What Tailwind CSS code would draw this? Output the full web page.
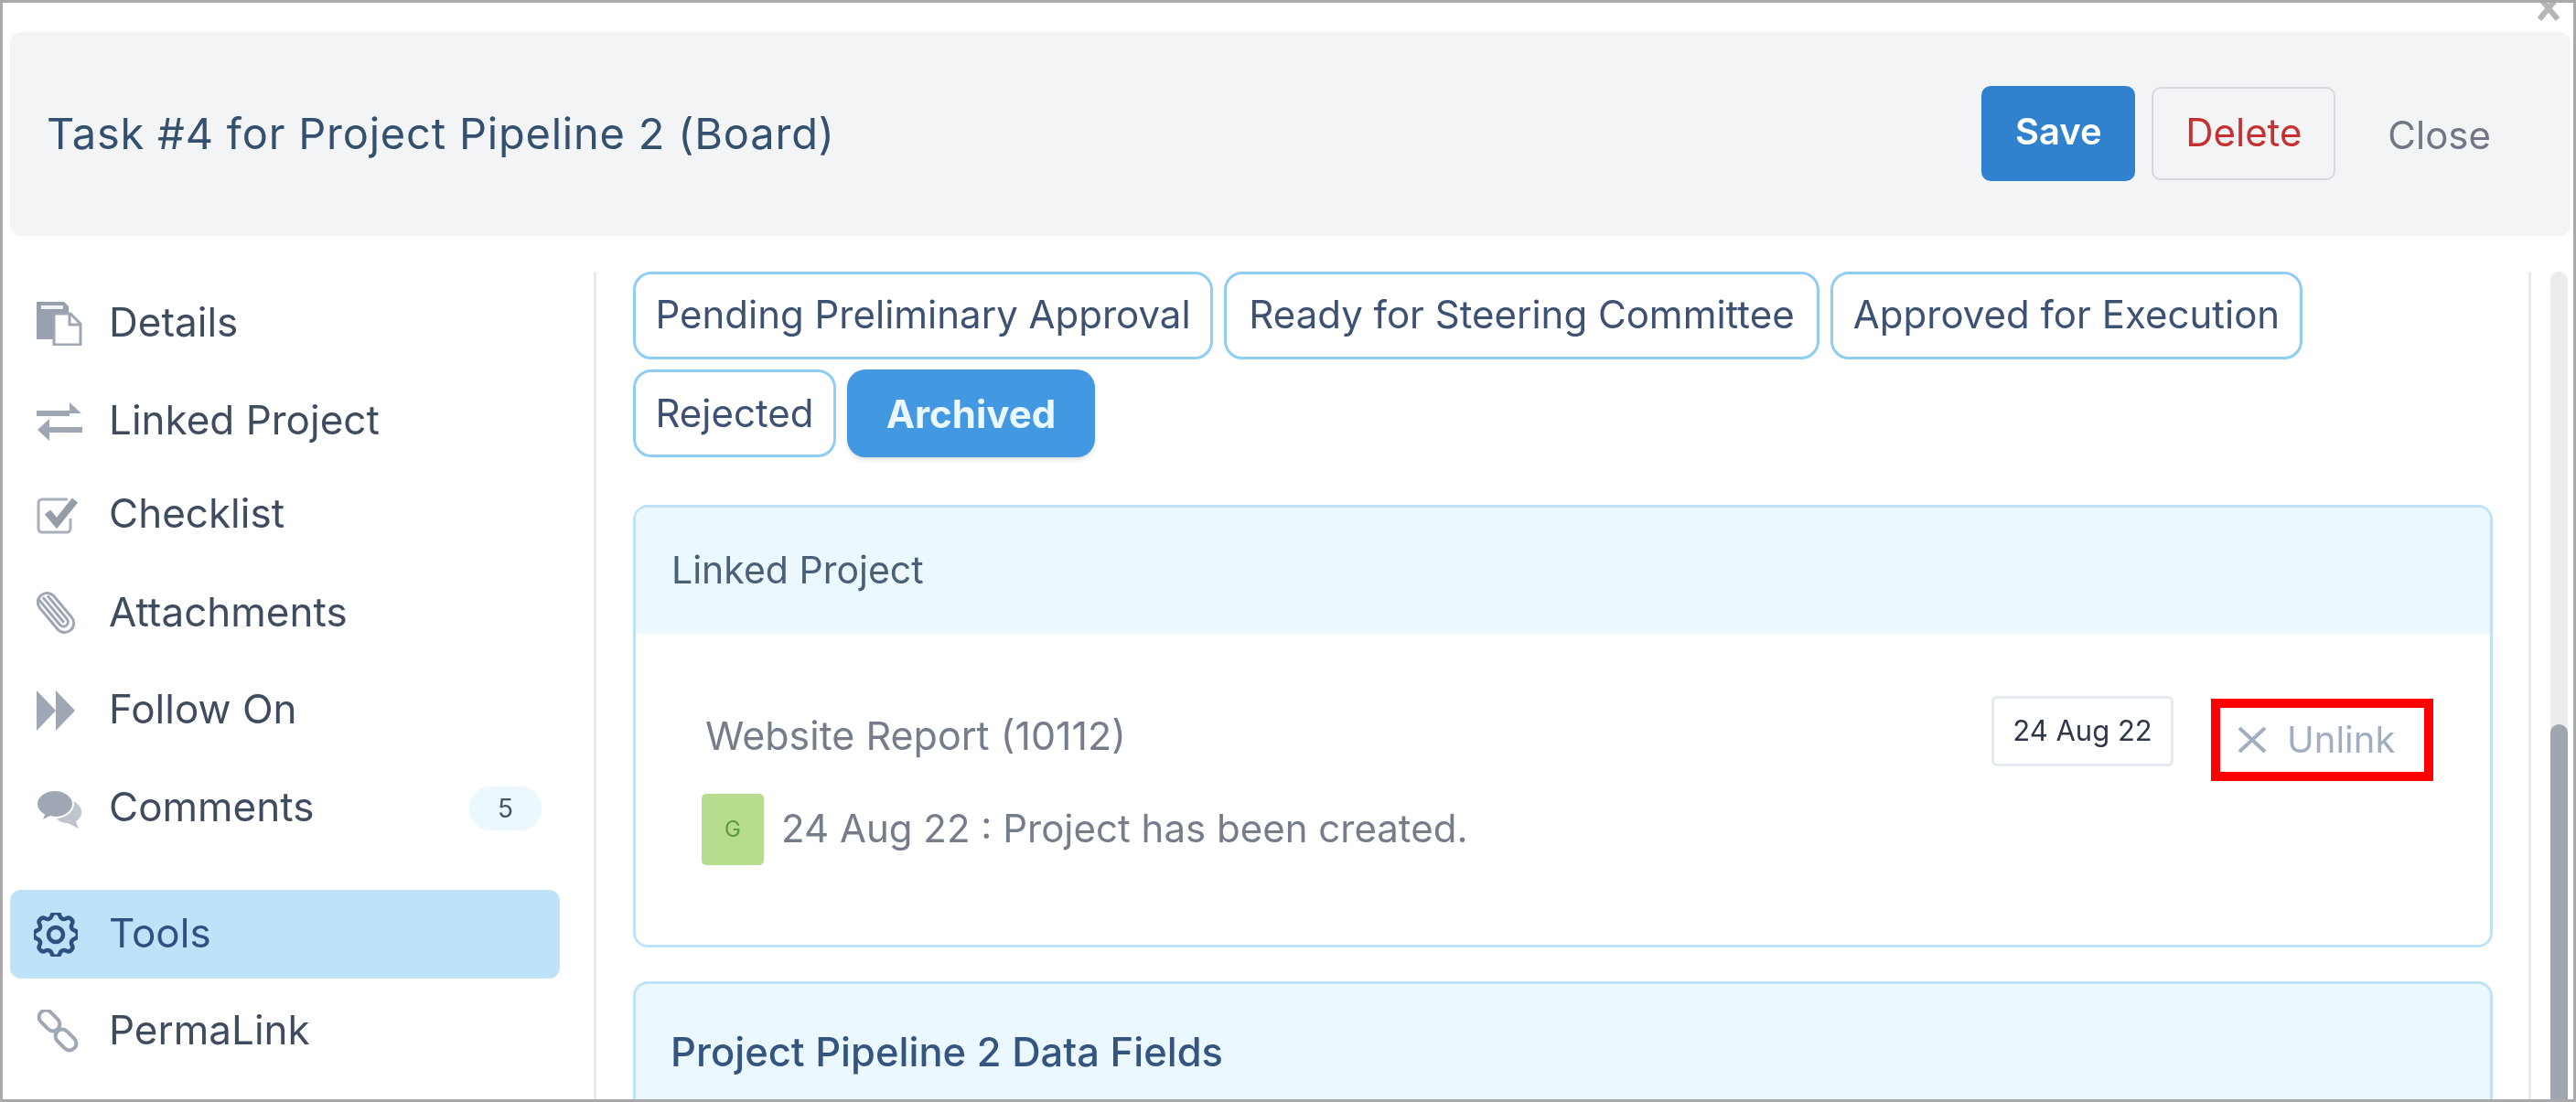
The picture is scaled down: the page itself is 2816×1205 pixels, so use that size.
<!DOCTYPE html>
<html lang="en">
<head>
    <meta charset="UTF-8">
    <title>Task #4</title>
    <script src="https://cdn.jsdelivr.net/npm/@tailwindcss/browser@4"></script>
</head>
<body class="bg-white">
<div class="relative w-[2816px] h-[1205px] overflow-hidden border-[3px] border-[#a9a9a9] bg-white blur-[0.6px] font-['Inter',sans-serif]">

    <!-- modal close -->
    <svg class="absolute left-[2770px] top-[-9px] w-[26px] h-[30px] text-[#b5b5b5]" viewBox="0 0 26 30" fill="none" stroke="currentColor" stroke-width="6"><path d="M3 3l20 24M23 3L3 27"/></svg>

    <!-- header -->
    <div class="mt-[32px] ml-[8px] w-[2799px] h-[223px] rounded-[12px] bg-[#f3f4f6] flex items-center pl-[40px] pr-[87px]">
        <h1 class="text-[47px] tracking-[0.8px] leading-none text-[#34506f] mt-[-2px]">Task #4 for Project Pipeline 2 (Board)</h1>
        <div class="ml-auto flex items-center">
            <button class="w-[168px] h-[104px] pb-[3px] rounded-[10px] bg-[#3182ce] text-white text-[40px] font-semibold mt-[-2px]">Save</button>
            <button class="ml-[18px] w-[201px] h-[102px] pb-[3px] rounded-[10px] border-[2px] border-[#d5d8de] text-[#c53030] text-[42px] mt-[-2px]">Delete</button>
            <span class="ml-[57px] text-[42px] text-[#6f7785] mt-[2px]">Close</span>
        </div>
    </div>

    <div class="flex h-[950px] mt-[39px]">
        <!-- sidebar -->
        <aside class="w-[649px] shrink-0 border-r-[3px] border-[#e8eaee] pl-[8px] text-[44px] text-[#3f4c5f]">
            <div class="w-[601px]">
                <div class="h-[97px] mt-[8px] flex items-center pl-[29px]">
                    <svg class="w-[50px] h-[48px] shrink-0" viewBox="0 0 50 48"><path d="M0 0h30l5 5v36H0z" fill="#98a0ae"/><rect x="5" y="4" width="24" height="4" fill="#f3f4f6"/><path d="M19 13h18l11 11v23H19z" fill="#fff" stroke="#a0a7b4" stroke-width="3"/><path d="M36 14v11h11" fill="none" stroke="#a0a7b4" stroke-width="3"/></svg>
                    <span class="ml-[29px] mt-[-3px]">Details</span>
                </div>
                <div class="h-[97px] mt-[10px] flex items-center pl-[29px]">
                    <svg class="w-[50px] h-[48px] shrink-0" viewBox="0 0 50 48" fill="#a0a7b4"><path d="M0 12h36V3l13 12-13 0v3H0zM50 30H14v-9L1 33l13 12v-9h36z"/></svg>
                    <span class="ml-[29px] mt-[-3px]">Linked Project</span>
                </div>
                <div class="h-[97px] mt-[5px] flex items-center pl-[29px]">
                    <svg class="w-[50px] h-[48px] shrink-0" viewBox="0 0 50 48" fill="none"><path d="M34 7H6a4 4 0 0 0-4 4v28a4 4 0 0 0 4 4h27a4 4 0 0 0 4-4V28" stroke="#a9b0bc" stroke-width="3"/><path d="M12 21l10 12L42 8" stroke="#959dab" stroke-width="8"/></svg>
                    <span class="ml-[29px] mt-[-3px]">Checklist</span>
                </div>
                <div class="h-[97px] mt-[11px] flex items-center pl-[29px]">
                    <svg class="w-[50px] h-[48px] shrink-0" viewBox="0 0 50 48" fill="none" stroke="#a0a7b4" stroke-width="3"><g transform="translate(21 23) rotate(-40)"><rect x="-10" y="-25" width="20" height="50" rx="10"/><path d="M-5 -25V13a5 5 0 0 0 10 0V-20M0 -22V14"/></g></svg>
                    <span class="ml-[29px] mt-[-3px]">Attachments</span>
                </div>
                <div class="h-[97px] mt-[9px] flex items-center pl-[29px]">
                    <svg class="w-[50px] h-[48px] shrink-0" viewBox="0 0 50 48" fill="#a0a7b4"><path d="M0 2l21 22L0 46zM21 2l21 22-21 22z"/></svg>
                    <span class="ml-[29px] mt-[-3px]">Follow On</span>
                </div>
                <div class="h-[97px] mt-[10px] flex items-center pl-[29px]">
                    <svg class="w-[50px] h-[48px] shrink-0" viewBox="0 0 50 48"><path d="M40 16c6 3 10 8 9 14-1 4-3 6-6 8l3 8-12-6c-5 0-10-2-12-5z" fill="#c0c5cd"/><path d="M20 4C9 4 0 11 0 19c0 5 3 9 8 12l-3 7 10-5c2 0 3 1 5 1 11 0 20-7 20-15S31 4 20 4z" fill="#a0a7b4" stroke="#fff" stroke-width="2"/></svg>
                    <span class="ml-[29px] mt-[-3px]">Comments</span>
                    <span class="ml-auto mr-[20px] w-[79px] h-[48px] rounded-full bg-[#ebf8ff] text-[28px] text-[#4a5568] flex items-center justify-center">5</span>
                </div>
                <div class="h-[97px] mt-[41px] rounded-[12px] bg-[#bee3f8] flex items-center pl-[26px] text-[#2c5282]">
                    <svg class="w-[48px] h-[48px] shrink-0" viewBox="3 3 18 18" fill="none" stroke="#2c5282" stroke-width="1.7"><path d="M10.325 4.317c.426-1.756 2.924-1.756 3.35 0a1.724 1.724 0 002.573 1.066c1.543-.94 3.31.826 2.37 2.37a1.724 1.724 0 001.065 2.572c1.756.426 1.756 2.924 0 3.35a1.724 1.724 0 00-1.066 2.573c.94 1.543-.826 3.31-2.37 2.37a1.724 1.724 0 00-2.572 1.065c-.426 1.756-2.924 1.756-3.35 0a1.724 1.724 0 00-2.573-1.066c-1.543.94-3.31-.826-2.37-2.37a1.724 1.724 0 00-1.065-2.572c-1.756-.426-1.756-2.924 0-3.35a1.724 1.724 0 001.066-2.573c-.94-1.543.826-3.31 2.37-2.37.996.608 2.296.07 2.572-1.065z"/><circle cx="12" cy="12" r="3"/></svg>
                    <span class="ml-[34px] mt-[-3px]">Tools</span>
                </div>
                <div class="h-[97px] mt-[9px] flex items-center pl-[29px]">
                    <svg class="w-[50px] h-[48px] shrink-0" viewBox="0 0 50 48" fill="none" stroke="#a0a7b4" stroke-width="4"><rect x="-13" y="-7.5" width="26" height="15" rx="7.5" transform="translate(14 12) rotate(45)"/><rect x="-13" y="-7.5" width="26" height="15" rx="7.5" transform="translate(32 33) rotate(45)"/></svg>
                    <span class="ml-[29px] mt-[-3px]">PermaLink</span>
                </div>
            </div>
        </aside>

        <!-- main column -->
        <main class="w-[2115px] shrink-0 border-r-[3px] border-[#e8eaee] pl-[40px]">
            <div class="flex flex-wrap gap-x-[12px] gap-y-[11px] w-[2040px] text-[42px] text-[#3d5272]">
                <span class="w-[634px] h-[96px] pb-[3px] rounded-[20px] border-[3px] border-[#90cdf4] flex items-center justify-center">Pending Preliminary Approval</span>
                <span class="w-[651px] h-[96px] pb-[3px] rounded-[20px] border-[3px] border-[#90cdf4] flex items-center justify-center">Ready for Steering Committee</span>
                <span class="w-[516px] h-[96px] pb-[3px] rounded-[20px] border-[3px] border-[#90cdf4] flex items-center justify-center">Approved for Execution</span>
                <span class="w-[222px] h-[96px] pb-[1px] rounded-[20px] border-[3px] border-[#90cdf4] flex items-center justify-center">Rejected</span>
                <span class="w-[271px] h-[96px] rounded-[20px] bg-[#4299e1] text-[#ebf8ff] font-bold shadow-md flex items-center justify-center">Archived</span>
            </div>

            <section class="mt-[52px] w-[2033px] h-[484px] rounded-[16px] border-[3px] border-[#bee3f8] overflow-hidden">
                <div class="h-[138px] bg-[#ebf8ff] flex items-center pl-[39px] text-[41px] text-[#4a5f78]">Linked Project</div>
                <div class="relative pl-[76px] pt-[75px]">
                    <div class="flex items-center h-[85px] mt-[-2px]">
                        <span class="text-[43px] text-[#767d8a] mt-[-8px]">Website Report (10112)</span>
                        <span class="ml-auto w-[199px] h-[77px] rounded-[6px] border-[3px] border-[#e5e9f0] text-[31px] text-[#2d3748] flex items-center justify-center mt-[-19px]">24 Aug 22</span>
                        <div class="ml-[41px] mr-[62px] w-[243px] h-[90px] border-[10px] border-[#ff0000] flex items-center pl-[19px] text-[#a0aec0] text-[40px]">
                            <svg class="w-[32px] h-[28px] shrink-0" viewBox="0 0 32 28" fill="none" stroke="currentColor" stroke-width="4"><path d="M2 1l28 26M30 1L2 27"/></svg>
                            <span class="ml-[22px]">Unlink</span>
                        </div>
                    </div>
                    <div class="flex items-center ml-[-4px] mt-[17px] text-[42px] text-[#767d8a]">
                        <span class="w-[68px] h-[78px] rounded-[5px] bg-[#b6dc8e] text-[#5c9a3c] text-[24px] flex items-center justify-center">G</span>
                        <span class="ml-[19px] mt-[-4px]">24 Aug 22 : Project has been created.</span>
                    </div>
                </div>
            </section>

            <section class="mt-[37px] w-[2033px] h-[200px] rounded-[16px] border-[3px] border-[#bee3f8] bg-[#ebf8ff] pl-[38px] pt-[42px] text-[43.5px] font-medium text-[#34557f]">
                Project Pipeline 2 Data Fields
            </section>
        </main>

        <!-- scrollbar -->
        <div class="ml-[21px] w-[19px] h-[950px] rounded-t-[10px] bg-[#ececec] overflow-hidden">
            <div class="mt-[495px] h-[460px] rounded-t-[10px] bg-[#9fa6b0]"></div>
        </div>
    </div>
</div>
</body>
</html>
